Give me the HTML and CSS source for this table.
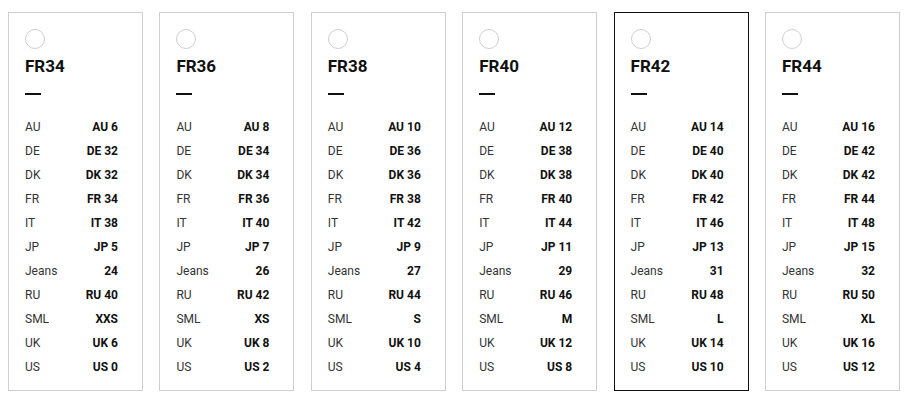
FILE: index.html
```html
<!DOCTYPE html>
<html>
<head>
<meta charset="utf-8">
<link rel="stylesheet" href="styles.css">
</head>
<body>
<div class="sizes">
  <div class="card">
    <div class="radio"></div>
    <div class="title">FR34</div>
    <div class="dash"></div>
    <div class="rows">
      <div class="row"><span class="k">AU</span><span class="v">AU 6</span></div>
      <div class="row"><span class="k">DE</span><span class="v">DE 32</span></div>
      <div class="row"><span class="k">DK</span><span class="v">DK 32</span></div>
      <div class="row"><span class="k">FR</span><span class="v">FR 34</span></div>
      <div class="row"><span class="k">IT</span><span class="v">IT 38</span></div>
      <div class="row"><span class="k">JP</span><span class="v">JP 5</span></div>
      <div class="row"><span class="k">Jeans</span><span class="v">24</span></div>
      <div class="row"><span class="k">RU</span><span class="v">RU 40</span></div>
      <div class="row"><span class="k">SML</span><span class="v">XXS</span></div>
      <div class="row"><span class="k">UK</span><span class="v">UK 6</span></div>
      <div class="row"><span class="k">US</span><span class="v">US 0</span></div>
    </div>
  </div>
  <div class="card">
    <div class="radio"></div>
    <div class="title">FR36</div>
    <div class="dash"></div>
    <div class="rows">
      <div class="row"><span class="k">AU</span><span class="v">AU 8</span></div>
      <div class="row"><span class="k">DE</span><span class="v">DE 34</span></div>
      <div class="row"><span class="k">DK</span><span class="v">DK 34</span></div>
      <div class="row"><span class="k">FR</span><span class="v">FR 36</span></div>
      <div class="row"><span class="k">IT</span><span class="v">IT 40</span></div>
      <div class="row"><span class="k">JP</span><span class="v">JP 7</span></div>
      <div class="row"><span class="k">Jeans</span><span class="v">26</span></div>
      <div class="row"><span class="k">RU</span><span class="v">RU 42</span></div>
      <div class="row"><span class="k">SML</span><span class="v">XS</span></div>
      <div class="row"><span class="k">UK</span><span class="v">UK 8</span></div>
      <div class="row"><span class="k">US</span><span class="v">US 2</span></div>
    </div>
  </div>
  <div class="card">
    <div class="radio"></div>
    <div class="title">FR38</div>
    <div class="dash"></div>
    <div class="rows">
      <div class="row"><span class="k">AU</span><span class="v">AU 10</span></div>
      <div class="row"><span class="k">DE</span><span class="v">DE 36</span></div>
      <div class="row"><span class="k">DK</span><span class="v">DK 36</span></div>
      <div class="row"><span class="k">FR</span><span class="v">FR 38</span></div>
      <div class="row"><span class="k">IT</span><span class="v">IT 42</span></div>
      <div class="row"><span class="k">JP</span><span class="v">JP 9</span></div>
      <div class="row"><span class="k">Jeans</span><span class="v">27</span></div>
      <div class="row"><span class="k">RU</span><span class="v">RU 44</span></div>
      <div class="row"><span class="k">SML</span><span class="v">S</span></div>
      <div class="row"><span class="k">UK</span><span class="v">UK 10</span></div>
      <div class="row"><span class="k">US</span><span class="v">US 4</span></div>
    </div>
  </div>
  <div class="card">
    <div class="radio"></div>
    <div class="title">FR40</div>
    <div class="dash"></div>
    <div class="rows">
      <div class="row"><span class="k">AU</span><span class="v">AU 12</span></div>
      <div class="row"><span class="k">DE</span><span class="v">DE 38</span></div>
      <div class="row"><span class="k">DK</span><span class="v">DK 38</span></div>
      <div class="row"><span class="k">FR</span><span class="v">FR 40</span></div>
      <div class="row"><span class="k">IT</span><span class="v">IT 44</span></div>
      <div class="row"><span class="k">JP</span><span class="v">JP 11</span></div>
      <div class="row"><span class="k">Jeans</span><span class="v">29</span></div>
      <div class="row"><span class="k">RU</span><span class="v">RU 46</span></div>
      <div class="row"><span class="k">SML</span><span class="v">M</span></div>
      <div class="row"><span class="k">UK</span><span class="v">UK 12</span></div>
      <div class="row"><span class="k">US</span><span class="v">US 8</span></div>
    </div>
  </div>
  <div class="card selected">
    <div class="radio"></div>
    <div class="title">FR42</div>
    <div class="dash"></div>
    <div class="rows">
      <div class="row"><span class="k">AU</span><span class="v">AU 14</span></div>
      <div class="row"><span class="k">DE</span><span class="v">DE 40</span></div>
      <div class="row"><span class="k">DK</span><span class="v">DK 40</span></div>
      <div class="row"><span class="k">FR</span><span class="v">FR 42</span></div>
      <div class="row"><span class="k">IT</span><span class="v">IT 46</span></div>
      <div class="row"><span class="k">JP</span><span class="v">JP 13</span></div>
      <div class="row"><span class="k">Jeans</span><span class="v">31</span></div>
      <div class="row"><span class="k">RU</span><span class="v">RU 48</span></div>
      <div class="row"><span class="k">SML</span><span class="v">L</span></div>
      <div class="row"><span class="k">UK</span><span class="v">UK 14</span></div>
      <div class="row"><span class="k">US</span><span class="v">US 10</span></div>
    </div>
  </div>
  <div class="card">
    <div class="radio"></div>
    <div class="title">FR44</div>
    <div class="dash"></div>
    <div class="rows">
      <div class="row"><span class="k">AU</span><span class="v">AU 16</span></div>
      <div class="row"><span class="k">DE</span><span class="v">DE 42</span></div>
      <div class="row"><span class="k">DK</span><span class="v">DK 42</span></div>
      <div class="row"><span class="k">FR</span><span class="v">FR 44</span></div>
      <div class="row"><span class="k">IT</span><span class="v">IT 48</span></div>
      <div class="row"><span class="k">JP</span><span class="v">JP 15</span></div>
      <div class="row"><span class="k">Jeans</span><span class="v">32</span></div>
      <div class="row"><span class="k">RU</span><span class="v">RU 50</span></div>
      <div class="row"><span class="k">SML</span><span class="v">XL</span></div>
      <div class="row"><span class="k">UK</span><span class="v">UK 16</span></div>
      <div class="row"><span class="k">US</span><span class="v">US 12</span></div>
    </div>
  </div>
</div>
</body>
</html>
```
FILE: styles.css
```css
* { box-sizing: border-box; }
html, body { background: #fff; }
body {
  margin: 0;
  padding: 12px 8px;
  font-family: Roboto, "Liberation Sans", sans-serif;
  color: #111;
}
.sizes {
  display: flex;
  gap: 16.4px;
}
.card {
  width: 135px;
  flex: none;
  border: 1px solid #cfcfcf;
  padding: 16px 24px 11px 16px;
}
.card.selected {
  border-color: #111;
}
.radio {
  width: 20px;
  height: 20px;
  border: 1px solid #cfcfcf;
  border-radius: 50%;
}
.title {
  margin-top: 7px;
  font-size: 17px;
  line-height: 20px;
  font-weight: 700;
  color: #111;
}
.dash {
  margin-top: 17px;
  width: 16px;
  height: 2px;
  background: #111;
}
.rows {
  margin-top: 20px;
}
.row {
  display: flex;
  justify-content: space-between;
  height: 24px;
  line-height: 24px;
  font-size: 12px;
}
.k {
  color: #333;
}
.v {
  font-weight: 700;
  color: #111;
}
```
